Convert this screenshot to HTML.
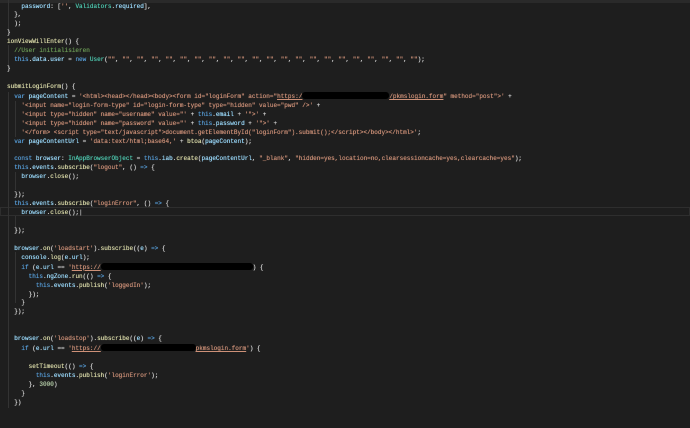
<!DOCTYPE html>
<html><head><meta charset="utf-8"><style>
html,body{margin:0;padding:0;background:#1e1e1e;width:690px;height:428px;overflow:hidden}
.top{position:absolute;left:0;top:0;width:690px;height:3px;background:#2a2a2a}
pre{position:absolute;left:7px;top:2.5px;margin:0;font-family:"Liberation Mono",monospace;font-size:6px;line-height:8.93px;color:#d4d4d4;white-space:pre;text-shadow:0 0 0.5px currentColor}
.k{color:#569cd6}.p{color:#9cdcfe}.f{color:#dcdcaa}.s{color:#ce9178}.c{color:#6a9955}.t{color:#4ec9b0}.n{color:#b5cea8}
.u{text-decoration:underline}
.r{display:inline-block;height:7px;background:#000;border-radius:3px;vertical-align:-1px}
.cur{position:absolute;left:0;top:207px;width:690px;height:9px;border:1px solid #2e2e2e;box-sizing:border-box}
.g{position:absolute;width:1px;background:#333}
</style></head><body>
<div class="top"></div>
<div class="cur"></div>
<div class="g" style="left:8px;top:0;height:34px"></div>
<div class="g" style="left:8px;top:45px;height:27px"></div>
<div class="g" style="left:8px;top:92px;height:316px"></div>
<div class="g" style="left:15px;top:101px;height:36px"></div>
<div class="g" style="left:15px;top:172px;height:18px"></div>
<div class="g" style="left:15px;top:216px;height:18px"></div>
<div class="g" style="left:15px;top:252px;height:51px"></div>
<pre>    <span class="p">password</span>: [<span class="s">''</span>, <span class="t">Validators</span>.<span class="p">required</span>],
  },
  );
}
<span class="f">ionViewWillEnter</span>() {
  <span class="c">//User initialisieren</span>
  <span class="k">this</span>.<span class="p">data</span>.<span class="p">user</span> = <span class="k">new</span> <span class="t">User</span>(<span class="s">""</span>, <span class="s">""</span>, <span class="s">""</span>, <span class="s">""</span>, <span class="s">""</span>, <span class="s">""</span>, <span class="s">""</span>, <span class="s">""</span>, <span class="s">""</span>, <span class="s">""</span>, <span class="s">""</span>, <span class="s">""</span>, <span class="s">""</span>, <span class="s">""</span>, <span class="s">""</span>, <span class="s">""</span>, <span class="s">""</span>, <span class="s">""</span>, <span class="s">""</span>, <span class="s">""</span>, <span class="s">""</span>, <span class="s">""</span>);
}

<span class="f">submitLoginForm</span>() {
  <span class="k">var</span> <span class="p">pageContent</span> = <span class="s">'&lt;html&gt;&lt;head&gt;&lt;/head&gt;&lt;body&gt;&lt;form id="loginForm" action="<span class="u">https:/</span></span><span class="r" style="width:87px"></span><span class="s"><span class="u">/pkmslogin.form</span>" method="post"&gt;'</span> +
    <span class="s">'&lt;input name="login-form-type" id="login-form-type" type="hidden" value="pwd" /&gt;'</span> +
    <span class="s">'&lt;input type="hidden" name="username" value="'</span> + <span class="k">this</span>.<span class="p">email</span> + <span class="s">'"&gt;'</span> +
    <span class="s">'&lt;input type="hidden" name="password" value="'</span> + <span class="k">this</span>.<span class="p">password</span> + <span class="s">'"&gt;'</span> +
    <span class="s">'&lt;/form&gt; &lt;script type="text/javascript"&gt;document.getElementById("loginForm").submit();&lt;/script&gt;&lt;/body&gt;&lt;/html&gt;'</span>;
  <span class="k">var</span> <span class="p">pageContentUrl</span> = <span class="s">'data:text/html;base64,'</span> + <span class="f">btoa</span>(<span class="p">pageContent</span>);

  <span class="k">const</span> <span class="p">browser</span>: <span class="t">InAppBrowserObject</span> = <span class="k">this</span>.<span class="p">iab</span>.<span class="f">create</span>(<span class="p">pageContentUrl</span>, <span class="s">"_blank"</span>, <span class="s">"hidden=yes,location=no,clearsessioncache=yes,clearcache=yes"</span>);
  <span class="k">this</span>.<span class="p">events</span>.<span class="f">subscribe</span>(<span class="s">"logout"</span>, () <span class="k">=&gt;</span> {
    <span class="p">browser</span>.<span class="f">close</span>();

  });
  <span class="k">this</span>.<span class="p">events</span>.<span class="f">subscribe</span>(<span class="s">"loginError"</span>, () <span class="k">=&gt;</span> {
    <span class="p">browser</span>.<span class="f">close</span>();|

  });

  <span class="p">browser</span>.<span class="f">on</span>(<span class="s">'loadstart'</span>).<span class="f">subscribe</span>((<span class="p">e</span>) <span class="k">=&gt;</span> {
    <span class="p">console</span>.<span class="f">log</span>(<span class="p">e</span>.<span class="p">url</span>);
    <span class="k">if</span> (<span class="p">e</span>.<span class="p">url</span> == <span class="s">'<span class="u">https://</span></span><span class="r" style="width:152px"></span>) {
      <span class="k">this</span>.<span class="p">ngZone</span>.<span class="f">run</span>(() <span class="k">=&gt;</span> {
        <span class="k">this</span>.<span class="p">events</span>.<span class="f">publish</span>(<span class="s">'loggedIn'</span>);
      });
    }
  });


  <span class="p">browser</span>.<span class="f">on</span>(<span class="s">'loadstop'</span>).<span class="f">subscribe</span>((<span class="p">e</span>) <span class="k">=&gt;</span> {
    <span class="k">if</span> (<span class="p">e</span>.<span class="p">url</span> == <span class="s">'<span class="u">https://</span></span><span class="r" style="width:95px"></span><span class="s"><span class="u">pkmslogin.form</span>'</span>) {

      <span class="f">setTimeout</span>(() <span class="k">=&gt;</span> {
        <span class="k">this</span>.<span class="p">events</span>.<span class="f">publish</span>(<span class="s">'loginError'</span>);
      }, <span class="n">3000</span>)
    }
  })</pre>
</body></html>
